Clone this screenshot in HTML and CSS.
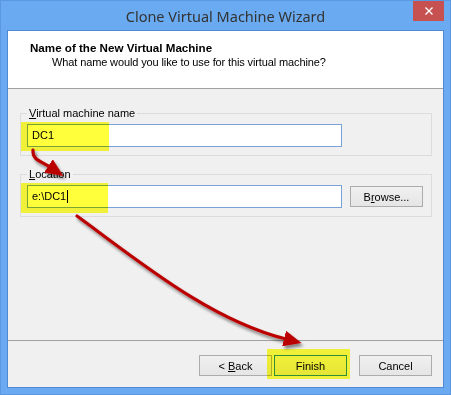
FILE: index.html
```html
<!DOCTYPE html>
<html lang="en">
<head>
  <meta charset="UTF-8">
  <title>Clone Virtual Machine Wizard</title>
  <link rel="stylesheet" href="styles.css">
</head>
<body>
  <div class="window">
    <div class="titlebar">
      <span></span>
      <div class="title">Clone Virtual Machine Wizard</div>
      <div class="close">
        <svg width="8" height="8" viewBox="0 0 8 8">
          <path d="M0.5 0.5 L7.5 7.5 M7.5 0.5 L0.5 7.5" stroke="#fff" stroke-width="1.4"/>
        </svg>
      </div>
    </div>

    <div class="client">
      <div class="header">
        <div class="heading">Name of the New Virtual Machine</div>
        <div class="subheading">What name would you like to use for this virtual machine?</div>
      </div>

      <div class="content">
        <fieldset class="group first">
          <legend><u>V</u>irtual machine name</legend>
          <div class="textbox">DC1</div>
        </fieldset>

        <fieldset class="group">
          <legend><u>L</u>ocation</legend>
          <div class="row">
            <div class="textbox">e:\DC1<span class="caret"></span></div>
            <button class="btn">B<u>r</u>owse...</button>
          </div>
        </fieldset>
      </div>

      <div class="footer">
        <button class="btn back">&lt; <u>B</u>ack</button>
        <button class="btn default">Finish</button>
        <button class="btn">Cancel</button>
      </div>
    </div>

    <!-- annotations drawn on top of the dialog -->
    <div class="overlay">
      <div class="marker m-name"></div>
      <div class="marker m-location"></div>
      <div class="marker m-finish"></div>
      <svg class="arrows" width="451" height="395" viewBox="0 0 451 395">
        <defs>
          <marker id="head" markerUnits="userSpaceOnUse" markerWidth="20" markerHeight="16" refX="2" refY="8" orient="auto">
            <path d="M0 0 L18 8 L0 16 z" fill="#bb0000"/>
          </marker>
          <filter id="shadow" x="-20%" y="-20%" width="140%" height="140%">
            <feDropShadow dx="2" dy="3" stdDeviation="1.5" flood-color="#000" flood-opacity="0.45"/>
          </filter>
        </defs>
        <g filter="url(#shadow)" fill="none" stroke="#bb0000" stroke-width="3.2" stroke-linecap="round">
          <path d="M33 150 C32 160 41 161 50 167" marker-end="url(#head)"/>
          <path d="M77 216 C140 262 210 320 286 339" marker-end="url(#head)"/>
        </g>
      </svg>
    </div>
  </div>
</body>
</html>
```

FILE: styles.css
```css
* {
  box-sizing: border-box;
}

body {
  margin: 0;
  font-family: "Liberation Sans", Arial, sans-serif;
  font-size: 11px;
  color: #000;
  background: #6aaaf0;
}

.window {
  position: relative;
  width: 451px;
  height: 395px;
  display: flex;
  flex-direction: column;
  padding: 0 6px 6px;
  border: 1px solid #5a98e2;
  background: #6aaaf0;
}

.titlebar {
  height: 29px;
  display: grid;
  grid-template-columns: 31px 1fr 31px;
  align-items: start;
}

.title {
  text-align: center;
  font-family: "Noto Sans", "Open Sans", sans-serif;
  font-size: 14.5px;
  line-height: 20px;
  padding-top: 5px;
  color: #333;
}

.close {
  height: 20px;
  background: #c75050;
  display: flex;
  align-items: center;
  justify-content: center;
}

.client {
  flex: 1;
  display: flex;
  flex-direction: column;
  border: 1px solid #4f8ad4;
  background: #f0f0f0;
}

.header {
  height: 58px;
  padding: 10px 0 0 22px;
  background: #fff;
  border-bottom: 1px solid #a0a0a0;
}

.heading {
  font-weight: bold;
  font-size: 11.6px;
  line-height: 13px;
}

.subheading {
  margin: 2px 0 0 22px;
  line-height: 13px;
  letter-spacing: -0.12px;
}

.content {
  flex: 1;
  display: flex;
  flex-direction: column;
}

.group {
  margin: 12px 11px 0 12px;
  padding: 0 8px 8px 6px;
  border: 1px solid #dcdcdc;
  min-inline-size: 0;
}

.group.first {
  margin-top: 18px;
}

.group legend {
  padding: 0 2px;
  line-height: 13px;
}

.textbox {
  width: 315px;
  height: 23px;
  margin-top: 4px;
  padding-left: 4px;
  line-height: 21px;
  background: #fff;
  border: 1px solid #7ba2d6;
}

.caret {
  display: inline-block;
  width: 1px;
  height: 13px;
  margin-left: 1px;
  vertical-align: -3px;
  background: #000;
}

.row {
  display: flex;
  align-items: center;
  gap: 8px;
}

.row .btn {
  margin-top: 4px;
}

.btn {
  width: 73px;
  height: 21px;
  padding: 0;
  font-family: inherit;
  font-size: 11px;
  color: #000;
  background: linear-gradient(#f0f0f0, #e5e5e5);
  border: 1px solid #acacac;
  border-radius: 0;
}

.btn.default {
  border-color: #2f8fe8;
}

.footer {
  height: 47px;
  display: flex;
  justify-content: flex-end;
  align-items: flex-start;
  gap: 2px;
  padding: 14px 11px 0 0;
  border-top: 1px solid #a0a0a0;
}

.footer .default {
  margin-right: 10px;
}

.overlay {
  position: absolute;
  inset: -1px;
  pointer-events: none;
}

.marker {
  position: absolute;
  background: #ffff3c;
  mix-blend-mode: multiply;
}

.m-name {
  left: 21px;
  top: 122px;
  width: 88px;
  height: 29px;
}

.m-location {
  left: 21px;
  top: 183px;
  width: 87px;
  height: 30px;
}

.m-finish {
  left: 267px;
  top: 349px;
  width: 83px;
  height: 30px;
}

.arrows {
  position: absolute;
  left: 0;
  top: 0;
}
```
